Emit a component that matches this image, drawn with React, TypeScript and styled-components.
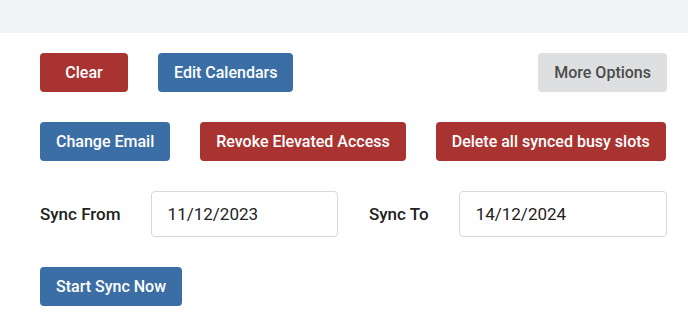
import styled, { createGlobalStyle } from 'styled-components';

const GlobalStyle = createGlobalStyle`
  body {
    margin: 0;
    background: #ffffff;
    font-family: Roboto, "Liberation Sans", sans-serif;
  }
`;

const TopBand = styled.div`
  height: 33px;
  background-color: #f3f4f6;
`;

const Panel = styled.section`
  display: flex;
  flex-direction: column;
  gap: 30px;
  padding: 20px 21px 0 40px;
`;

const Row = styled.div<{ $spread?: boolean }>`
  display: flex;
  align-items: center;
  gap: 30px;
  justify-content: ${(p) => (p.$spread ? 'space-between' : 'flex-start')};
`;

const Group = styled.div`
  display: flex;
  gap: 30px;
`;

type Tone = 'danger' | 'primary' | 'muted';

const tones: Record<Tone, { bg: string; fg: string }> = {
  danger: { bg: '#a93331', fg: '#ffffff' },
  primary: { bg: '#3b6ea5', fg: '#ffffff' },
  muted: { bg: '#dedfe1', fg: '#4b4c4e' },
};

const Button = styled.button<{ $tone: Tone; $min?: number }>`
  height: 39px;
  min-width: ${(p) => (p.$min ? `${p.$min}px` : 'auto')};
  padding: 0 16px;
  border: none;
  border-radius: 4px;
  background-color: ${(p) => tones[p.$tone].bg};
  color: ${(p) => tones[p.$tone].fg};
  font-family: Roboto, "Liberation Sans", sans-serif;
  font-size: 16px;
  font-weight: 500;
  cursor: pointer;
`;

const DateRow = styled.div`
  display: grid;
  grid-template-columns: minmax(0, 1fr) minmax(0, 1fr);
  column-gap: 31px;
`;

const Field = styled.label`
  display: flex;
  align-items: center;
  gap: 30px;
  min-width: 0;
`;

const FieldLabel = styled.span`
  font-size: 17px;
  font-weight: 500;
  color: #222222;
  white-space: nowrap;
`;

const DateInput = styled.input`
  flex: 1;
  width: 0;
  min-width: 0;
  height: 46px;
  box-sizing: border-box;
  padding: 0 16px;
  border: 1px solid #d9d9d9;
  border-radius: 4px;
  font-family: Roboto, "Liberation Sans", sans-serif;
  font-size: 17px;
  color: #222222;
`;

export default function App() {
  return (
    <>
      <GlobalStyle />
      <TopBand />
      <Panel>
        <Row $spread>
          <Group>
            <Button $tone="danger" $min={88}>Clear</Button>
            <Button $tone="primary">Edit Calendars</Button>
          </Group>
          <Button $tone="muted">More Options</Button>
        </Row>
        <Row>
          <Button $tone="primary">Change Email</Button>
          <Button $tone="danger">Revoke Elevated Access</Button>
          <Button $tone="danger">Delete all synced busy slots</Button>
        </Row>
        <DateRow>
          <Field>
            <FieldLabel>Sync From</FieldLabel>
            <DateInput defaultValue="11/12/2023" />
          </Field>
          <Field>
            <FieldLabel>Sync To</FieldLabel>
            <DateInput defaultValue="14/12/2024" />
          </Field>
        </DateRow>
        <Row>
          <Button $tone="primary">Start Sync Now</Button>
        </Row>
      </Panel>
    </>
  );
}
